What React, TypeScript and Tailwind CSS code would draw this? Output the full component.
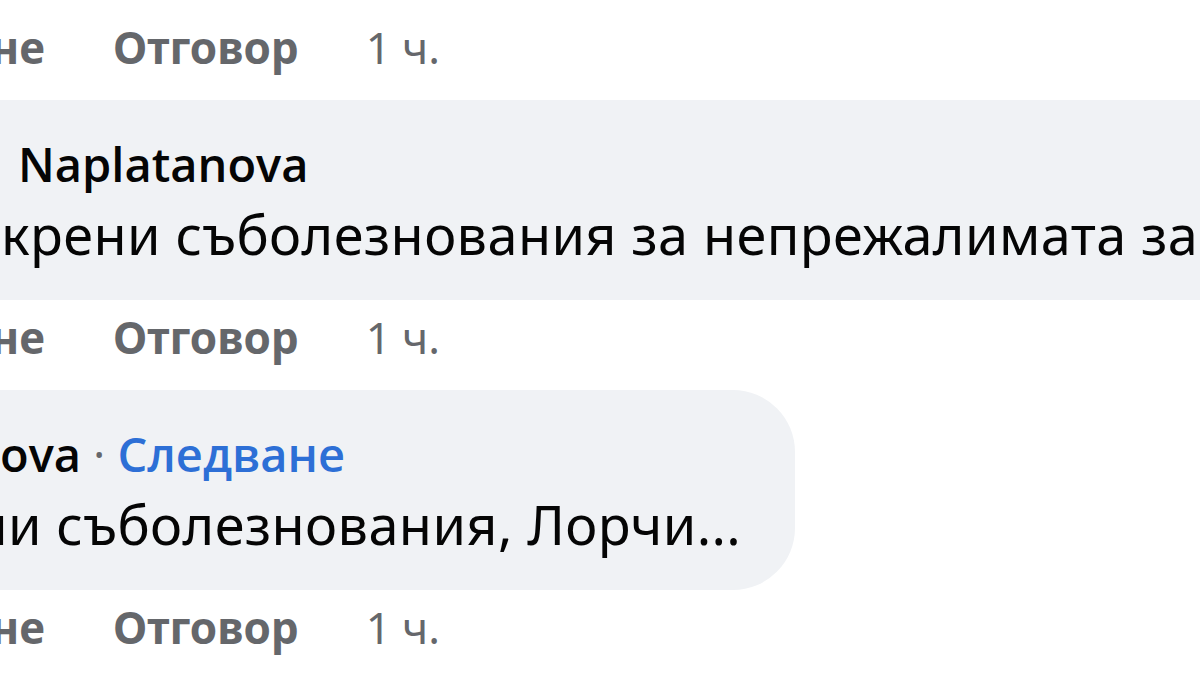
const font = { fontFamily: '"Noto Sans", "Open Sans", sans-serif' };
const nameFont = { fontFamily: '"Open Sans", "Noto Sans", sans-serif' };

const ActionRow = () => (
  <div className="h-[90px] pt-[11px] flex items-start whitespace-nowrap text-[44px] leading-[52px] text-[#65676b]">
    <div className="w-[45px] flex justify-end font-bold">Харесване</div>
    <div className="ml-[68px] font-bold">Отговор</div>
    <div className="ml-[67px] font-normal">1 ч.</div>
  </div>
);

type BubbleProps = {
  namePrefix: string;
  nameGap: string;
  name: string;
  follow?: boolean;
  textPrefix: string;
  textPrefixWidth: string;
  text: string;
  padRight: string;
};

const Bubble = ({ namePrefix, nameGap, name, follow, textPrefix, textPrefixWidth, text, padRight }: BubbleProps) => (
  <div className="flex">
    <div className={`-ml-[120px] pl-[120px] ${padRight} pt-[34px] pb-[25px] h-[200px] rounded-[62px] bg-[#f0f2f5] text-[#050505] whitespace-nowrap`}>
      <div style={nameFont} className="flex text-[47px] leading-[60px] font-semibold">
        <div className="w-0 flex justify-end">{namePrefix}</div>
        <span className={nameGap}>{name}</span>
        {follow && (
          <>
            <span className="font-normal text-[#65676b] px-[12px]">·</span>
            <span className="text-[#2d6fd6]">Следване</span>
          </>
        )}
      </div>
      <div className="flex text-[54px] leading-[80px] tracking-[0.4px]">
        <div className={`${textPrefixWidth} flex justify-end`}>{textPrefix}</div>
        <span>{text}</span>
      </div>
    </div>
  </div>
);

export default function App() {
  return (
    <div style={font} className="w-[1200px] h-[675px] overflow-hidden bg-white pt-[10px]">
      <ActionRow />
      <Bubble
        namePrefix="Мария"
        nameGap="pl-[18px]"
        name="Naplatanova"
        textPrefix="Ис"
        textPrefixWidth="w-[1px]"
        text="крени съболезнования за непрежалимата загуба!"
        padRight="pr-[45px]"
      />
      <ActionRow />
      <Bubble
        namePrefix="Petr"
        nameGap="pl-0"
        name="ova"
        follow
        textPrefix="Искрен"
        textPrefixWidth="w-[8px]"
        text="и съболезнования, Лорчи..."
        padRight="pr-[54px]"
      />
      <ActionRow />
    </div>
  );
}
